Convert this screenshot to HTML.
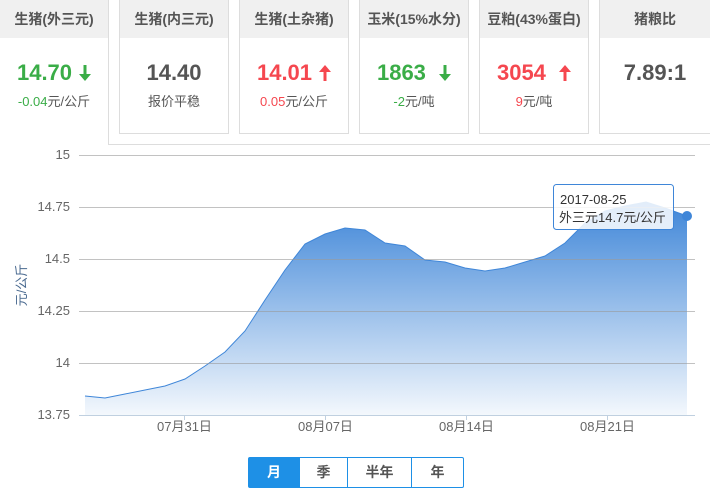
<!DOCTYPE html>
<html><head><meta charset="utf-8"><style>
*{margin:0;padding:0;box-sizing:border-box}
body{width:710px;height:500px;background:#fff;font-family:"Liberation Sans","Noto Sans CJK SC",sans-serif;position:relative;overflow:hidden;color:#555}
.big{position:absolute;left:108px;top:-1px;width:610px;height:146px;border:1px solid #ddd}
.card{position:absolute;top:0;width:110px;height:134px;border:1px solid #ddd;border-top:none;background:#fff;text-align:center}
.card.sel{border:none;height:144px;left:0;width:108px}
.hd{height:38px;background:#f0f0f0;line-height:38px;font-size:14px;font-weight:bold;color:#555}
.v{font-size:22px;font-weight:bold;margin-top:20px;height:30px;line-height:30px}
.s{font-size:13px;margin-top:3px;color:#555}
.g{color:#3aad47}.r{color:#f5474f}
.ar{margin-left:7px;vertical-align:-1px}
.yl{position:absolute;right:640px;font-size:13px;color:#666;text-align:right}
.xl{position:absolute;top:416px;font-size:13px;color:#666}
.btns{position:absolute;left:248px;top:457px;height:31px;width:216px;border:1px solid #1e90e6;border-radius:2px;display:flex;font-size:14px;font-weight:bold;color:#555}
.btns div{text-align:center;line-height:29px;border-left:1px solid #1e90e6}
</style></head><body>
<div class="big"></div>
<div class="card sel"><div class="hd">生猪(外三元)</div><div class="v g">14.70<svg class="ar" width="12" height="16" viewBox="0 0 12 16"><path d="M4.5,0H7.5V9H12L6,16L0,9H4.5Z" fill="#3aad47"/></svg></div><div class="s"><span class="g">-0.04</span>元/公斤</div></div>
<div class="card" style="left:119px"><div class="hd">生猪(内三元)</div><div class="v">14.40</div><div class="s">报价平稳</div></div>
<div class="card" style="left:239px"><div class="hd">生猪(土杂猪)</div><div class="v r">14.01<svg class="ar" width="12" height="16" viewBox="0 0 12 16"><path d="M4.5,16H7.5V7H12L6,0L0,7H4.5Z" fill="#f5474f"/></svg></div><div class="s"><span class="r">0.05</span>元/公斤</div></div>
<div class="card" style="left:359px"><div class="hd">玉米(15%水分)</div><div class="v g">1863 <svg class="ar" width="12" height="16" viewBox="0 0 12 16"><path d="M4.5,0H7.5V9H12L6,16L0,9H4.5Z" fill="#3aad47"/></svg></div><div class="s"><span class="g">-2</span>元/吨</div></div>
<div class="card" style="left:479px"><div class="hd">豆粕(43%蛋白)</div><div class="v r">3054 <svg class="ar" width="12" height="16" viewBox="0 0 12 16"><path d="M4.5,16H7.5V7H12L6,0L0,7H4.5Z" fill="#f5474f"/></svg></div><div class="s"><span class="r">9</span>元/吨</div></div>
<div class="card" style="left:599px;width:112px"><div class="hd">猪粮比</div><div class="v">7.89:1</div></div>

<svg style="position:absolute;left:0;top:0" width="710" height="500">
<defs><linearGradient id="gr" x1="0" y1="0" x2="0" y2="1"><stop offset="0" stop-color="#3f86d8"/><stop offset="1" stop-color="#3f86d8" stop-opacity="0.06"/></linearGradient></defs>
<path d="M85,396 L105,398 125,394 145,390 165,386 185,379 205,366 225,352 245,331 265,300 285,270 305,244 325,234 345,228 365,230 385,243 405,246 425,260 445,262 465,268 485,271 505,268 525,262 545,256 565,243 585,223 605,211 625,206 646,202 665,208 687,216 L687,415 L85,415Z" fill="url(#gr)"/>
<path d="M85,396 L105,398 125,394 145,390 165,386 185,379 205,366 225,352 245,331 265,300 285,270 305,244 325,234 345,228 365,230 385,243 405,246 425,260 445,262 465,268 485,271 505,268 525,262 545,256 565,243 585,223 605,211 625,206 646,202 665,208 687,216" fill="none" stroke="#3f86d8" stroke-width="1"/>
<g stroke="#999" stroke-opacity="0.6" stroke-width="1">
<line x1="79" y1="155.5" x2="695" y2="155.5"/><line x1="79" y1="207.5" x2="695" y2="207.5"/><line x1="79" y1="259.5" x2="695" y2="259.5"/><line x1="79" y1="311.5" x2="695" y2="311.5"/><line x1="79" y1="363.5" x2="695" y2="363.5"/></g>
<line x1="79" y1="415.5" x2="695" y2="415.5" stroke="#c0d0e0"/>
<g stroke="#c0d0e0"><line x1="184.5" y1="415" x2="184.5" y2="420"/><line x1="325.5" y1="415" x2="325.5" y2="420"/><line x1="466.5" y1="415" x2="466.5" y2="420"/><line x1="607.5" y1="415" x2="607.5" y2="420"/></g>
<circle cx="687" cy="216" r="5" fill="#3f86d8"/>
<rect x="553.5" y="184.5" width="120" height="45" rx="3" fill="#fff" fill-opacity="0.85" stroke="#3f86d8"/>
<text x="560" y="204" font-size="13" fill="#333" font-family="Liberation Sans,Noto Sans CJK SC,sans-serif">2017-08-25</text>
<text x="559" y="222" font-size="13" fill="#333" font-family="Liberation Sans,Noto Sans CJK SC,sans-serif">外三元14.7元/公斤</text>
<text transform="translate(26,285) rotate(-90)" text-anchor="middle" font-size="13" fill="#4a6a90" font-family="Liberation Sans,Noto Sans CJK SC,sans-serif">元/公斤</text>
</svg>
<div class="yl" style="top:147px">15</div>
<div class="yl" style="top:199px">14.75</div>
<div class="yl" style="top:251px">14.5</div>
<div class="yl" style="top:303px">14.25</div>
<div class="yl" style="top:355px">14</div>
<div class="yl" style="top:407px">13.75</div>
<div class="xl" style="left:157px">07月31日</div>
<div class="xl" style="left:298px">08月07日</div>
<div class="xl" style="left:439px">08月14日</div>
<div class="xl" style="left:580px">08月21日</div>
<div class="btns"><div style="width:50px;border:none;background:#1e90e6;color:#fff">月</div><div style="width:48px">季</div><div style="width:64px">半年</div><div style="flex:1">年</div></div>
</body></html>
